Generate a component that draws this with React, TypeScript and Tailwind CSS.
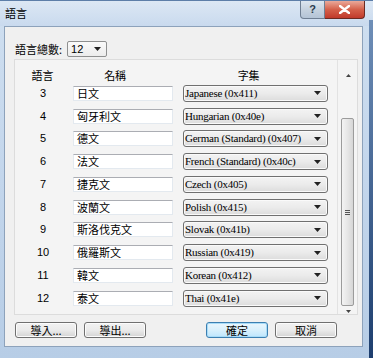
import React from "react";

const cjk = { fontFamily: '"Noto Sans CJK TC", "Noto Sans", sans-serif' };
const serif = { fontFamily: '"Liberation Serif", serif' };
const sans = { fontFamily: '"Liberation Sans", Arial, sans-serif' };

const rows: [string, string, string][] = [
  ["3", "日文", "Japanese (0x411)"],
  ["4", "匈牙利文", "Hungarian (0x40e)"],
  ["5", "德文", "German (Standard) (0x407)"],
  ["6", "法文", "French (Standard) (0x40c)"],
  ["7", "捷克文", "Czech (0x405)"],
  ["8", "波蘭文", "Polish (0x415)"],
  ["9", "斯洛伐克文", "Slovak (0x41b)"],
  ["10", "俄羅斯文", "Russian (0x419)"],
  ["11", "韓文", "Korean (0x412)"],
  ["12", "泰文", "Thai (0x41e)"],
];

function Arrow() {
  return (
    <svg width="7" height="4" viewBox="0 0 7 4" className="shrink-0">
      <path d="M0 0 H7 L3.5 4 Z" fill="#222" />
    </svg>
  );
}

function Btn({ label, primary }: { label: string; primary?: boolean }) {
  return (
    <div
      className={
        "h-[16px] w-[62px] flex items-center justify-center rounded-[3px] border text-[11px] leading-none text-black " +
        (primary
          ? "border-[#3c7fb1] bg-gradient-to-b from-[#eaf6fd] via-[#d9f0fc] to-[#bee6fd] shadow-[inset_0_0_0_1px_#a8dcf8]"
          : "border-[#707070] bg-gradient-to-b from-[#f2f2f2] via-[#ebebeb] to-[#d4d4d4] shadow-[inset_0_0_0_1px_#fcfcfc]")
      }
      style={cjk}
    >
      {label}
    </div>
  );
}

export default function App() {
  return (
    <div className="relative w-[373px] h-[358px] overflow-hidden bg-gradient-to-b from-[#cfdff0] via-[#c3d6ec] to-[#b7cde6] flex flex-col">
      {/* right dark strip */}
      <div className="absolute right-0 top-[20px] bottom-0 w-[4px] bg-gradient-to-b from-[#6f8fb8] to-[#1d3e6e]" />
      {/* title bar */}
      <div className="h-[26px] flex items-start justify-between shrink-0 bg-gradient-to-b from-[#dce7f4] to-[#c9daee] border-t border-[#5d7ea8]">
        <div className="pl-[5px] pt-[7px] text-[11px] leading-none text-black" style={cjk}>
          語言
        </div>
        <div className="flex mr-[8px]">
          <div className="w-[25px] h-[18px] rounded-bl-[4px] border border-t-0 border-[#6f7f93] bg-gradient-to-b from-[#dde6ef] via-[#c6d2df] to-[#b4c4d6] flex items-center justify-center text-[11px] text-[#2a3a4d] font-bold" style={sans}>
            ?
          </div>
          <div className="w-[40px] h-[18px] rounded-br-[4px] border border-t-0 border-l-0 border-[#6b2a22] bg-gradient-to-b from-[#e9a99a] via-[#d4604a] to-[#c0392b] flex items-center justify-center">
            <svg width="11" height="9" viewBox="0 0 11 9">
              <path d="M1 1 L10 8 M10 1 L1 8" stroke="#fff" strokeWidth="2.4" strokeLinecap="round" />
            </svg>
          </div>
        </div>
      </div>

      {/* client */}
      <div className="ml-[4px] mr-[10px] h-[321px] border border-[#8da2bb] bg-[#f0f0f0] flex flex-col">
        <div className="flex items-center pl-[10px] mt-[14px] h-[16px] gap-[5px]">
          <span className="text-[11px] leading-none text-black" style={cjk}>
            語言總數:
          </span>
          <div className="w-[40px] h-[16px] border border-[#8e8f8f] rounded-[2px] bg-gradient-to-b from-[#fafafa] to-[#ececec] flex items-center justify-between pl-[3px] pr-[5px]">
            <span className="text-[11px] leading-none" style={sans}>12</span>
            <Arrow />
          </div>
        </div>

        {/* panel */}
        <div className="ml-[9px] mt-[2px] w-[344px] h-[256px] border border-[#dcdcdc] bg-[#f4f4f4] flex">
          <div className="w-[323px] h-full border-r border-[#e2e2e2] flex flex-col pt-[8px]">
            <div className="flex h-[14px] items-center text-[11px] leading-none text-black" style={cjk}>
              <div className="w-[56px] text-center">語言</div>
              <div className="w-[92px] text-center">名稱</div>
              <div className="w-[180px] text-center">字集</div>
            </div>
            {rows.map(([n, name, cs]) => (
              <div key={n} className="flex items-center h-[22.75px] shrink-0">
                <div className="w-[56px] text-center text-[11px] leading-none text-black" style={sans}>
                  {n}
                </div>
                <div
                  className="ml-[2px] w-[100px] h-[15px] bg-white border border-[#e3e9ef] border-t-[#abadb3] flex items-center pl-[3px] text-[11px] leading-none text-black"
                  style={cjk}
                >
                  {name}
                </div>
                <div className="ml-[10px] w-[145px] h-[17px] rounded-[3px] border border-[#707070] bg-gradient-to-b from-[#f3f3f3] via-[#ebebeb] to-[#dcdcdc] shadow-[inset_0_0_0_1px_#fafafa] flex items-center justify-between pl-[1px] pr-[6px]">
                  <span className="text-[11px] leading-none text-black tracking-[-0.25px]" style={serif}>
                    {cs}
                  </span>
                  <Arrow />
                </div>
              </div>
            ))}
          </div>
          {/* scrollbar */}
          <div className="w-[16px] ml-[2px] mt-[6px] h-[250px] flex flex-col items-center">
            <div className="h-[18px] w-full flex items-center justify-center">
              <svg width="5" height="3" viewBox="0 0 5 3">
                <path d="M0 3 H5 L2.5 0 Z" fill="#444" />
              </svg>
            </div>
            <div className="flex-1 w-full flex flex-col justify-end">
              <div className="h-[188px] w-[13px] ml-[1px] rounded-[2px] border border-[#9b9b9b] bg-gradient-to-r from-[#f3f3f3] via-[#e6e6e6] to-[#d6d6d6] flex items-center justify-center">
                <div className="flex flex-col gap-[1px]">
                  <div className="w-[5px] h-px bg-[#555]" />
                  <div className="w-[5px] h-px bg-[#555]" />
                  <div className="w-[5px] h-px bg-[#555]" />
                </div>
              </div>
            </div>
            <div className="h-[10px] w-full flex items-center justify-center">
              <svg width="5" height="3" viewBox="0 0 5 3">
                <path d="M0 0 H5 L2.5 3 Z" fill="#444" />
              </svg>
            </div>
          </div>
        </div>

        {/* buttons */}
        <div className="flex items-center pl-[10px] mt-[7px]">
          <Btn label="導入..." />
          <div className="ml-[7px]">
            <Btn label="導出..." />
          </div>
          <div className="ml-[60px]">
            <Btn label="確定" primary />
          </div>
          <div className="ml-[7px]">
            <Btn label="取消" />
          </div>
        </div>
      </div>
    </div>
  );
}
